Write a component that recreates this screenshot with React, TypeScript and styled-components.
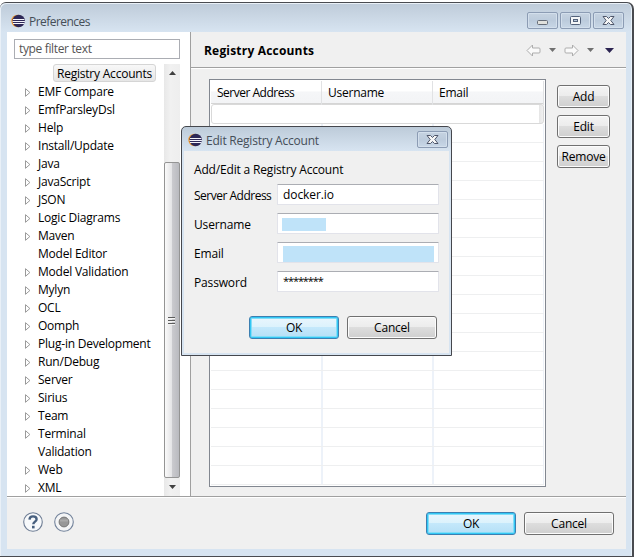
import React from 'react';
import styled, { createGlobalStyle, css } from 'styled-components';

const GlobalStyle = createGlobalStyle`
  *, *::before, *::after { box-sizing: border-box; }
  body { margin: 0; background: #fff; overflow: hidden; }
  button, input { font: inherit; letter-spacing: inherit; color: inherit; margin: 0; }
`;

const Desktop = styled.div`
  position: relative;
  width: 634px;
  height: 557px;
  padding-top: 2px;
  font: 12px/18px "Open Sans", "Noto Sans", sans-serif;
  letter-spacing: -0.22px;
  color: #000;
  white-space: nowrap;
`;

const Window = styled.section`
  width: 634px;
  height: 555px;
  display: flex;
  flex-direction: column;
  border: solid #494b50;
  border-width: 1px 2px 1px 0;
  border-radius: 6px 7px 0 0;
  padding: 0 6px 7px 7px;
  background: linear-gradient(#becbd9, #d7e4f1 29px);
  box-shadow: inset 1px 1px #e9f0f7, inset -1px 0 #e9f2fa;
`;

const TitleBar = styled.header<{ $small?: boolean }>`
  flex: none;
  height: ${(p) => (p.$small ? 24 : 29)}px;
  display: flex;
  align-items: flex-start;
  padding: ${(p) => (p.$small ? '4px 1px 0 4px' : '9px 2px 0 4px')};
`;

const TitleText = styled.h1<{ $track: number }>`
  flex: 1;
  margin: 1px 0 0 4px;
  font-size: 12px;
  line-height: 17px;
  font-weight: 400;
  letter-spacing: ${(p) => p.$track}px;
  color: #454e58;
`;

const LogoSvg = styled.svg`
  flex: none;
  margin-top: 2px;
`;

const CaptionButtons = styled.div`
  display: flex;
  gap: 2px;
`;

const CaptionButton = styled.button`
  width: 31px;
  height: 17px;
  padding: 0;
  display: flex;
  justify-content: center;
  align-items: center;
  border: 1px solid #8c9cb4;
  border-radius: 2px;
  background: linear-gradient(#c6d3e1, #bccbdc 50%, #c8d7e7);
  box-shadow: inset 0 0 0 1px #d3dfec;
  svg { display: block; }
`;

const Client = styled.div`
  flex: 1;
  min-height: 0;
  display: flex;
  flex-direction: column;
  background: #f0f0f0;
`;

const Panes = styled.div`
  height: 465px;
  display: flex;
  border-bottom: 1px solid #a0a0a0;
`;

const Sidebar = styled.nav`
  width: 184px;
  padding: 7px 0 0 7px;
  background: #fff;
  border-right: 1px solid #a0a0a0;
`;

const FilterInput = styled.input`
  display: block;
  width: 166px;
  height: 20px;
  padding: 0 4px 1px;
  border: 1px solid #abadb3;
  border-radius: 0;
  background: #fff;
  outline: none;
  letter-spacing: -0.35px;
  &::placeholder { color: #555; opacity: 1; }
`;

const TreeArea = styled.div`
  display: flex;
  width: 166px;
  height: 432px;
  margin-top: 5px;
`;

const Tree = styled.ul`
  flex: 1;
  min-width: 0;
  margin: 0;
  padding: 0;
  list-style: none;
`;

const TreeItem = styled.li`
  display: flex;
  align-items: center;
  height: 18px;
  padding-left: 11px;
  svg { flex: none; margin-top: 3px; }
`;

const TreeLabel = styled.span`
  margin-left: 7px;
  padding-top: 1px;
  line-height: 17px;
`;

const SelectedItem = styled.span`
  height: 18px;
  margin-left: 28px;
  padding: 0 3px;
  border: 1px solid #d5d5d5;
  border-radius: 3px;
  line-height: 17px;
  background: linear-gradient(#f8f8f8, #e6e6e6);
`;

const Scrollbar = styled.div`
  width: 16px;
  display: flex;
  flex-direction: column;
  background: linear-gradient(90deg, #e8e8e8, #f1f1f1 40%, #eee);
`;

const ScrollArrow = styled.div`
  height: 18px;
  display: flex;
  align-items: center;
  justify-content: center;
  &:first-child { margin-bottom: 80px; }
`;

const Thumb = styled.div`
  flex: 1;
  display: flex;
  align-items: center;
  justify-content: center;
  padding-right: 2px;
  border: 1px solid #949494;
  border-radius: 2px;
  background: linear-gradient(90deg, #fafafa, #e4e4e6 48%, #cacace 52%, #b9babf);
`;

const Main = styled.main`
  flex: 1;
  display: flex;
  flex-direction: column;
`;

const PageHeader = styled.div`
  height: 36px;
  display: flex;
  align-items: center;
  justify-content: space-between;
  padding: 3px 12px 0 13px;
  border-bottom: 1px solid #a0a0a0;
  box-shadow: 0 1px #fff;
`;

const PageTitle = styled.h2`
  margin: 0;
  font-size: 12px;
  font-weight: 700;
  letter-spacing: 0.19px;
`;

const PageBody = styled.div`
  flex: 1;
  display: flex;
  gap: 11px;
  padding: 11px 0 0 18px;
`;

const Table = styled.div`
  width: 337px;
  height: 408px;
  padding: 1px;
  border: 1px solid #828790;
  background: #fff;
`;

const TableRow = styled.div<{ $head?: boolean; $selected?: boolean }>`
  display: grid;
  grid-template-columns: 112px 111px 1fr;
  height: 19px;
  border-bottom: 1px solid #eeeff0;
  ${(p) =>
    p.$head &&
    css`
      grid-template-columns: 111px 111px 1fr;
      height: 23px;
      border-color: #d5d5d5;
      background: linear-gradient(#fff 45%, #f5f6f8 50%, #f3f4f6);
    `}
  ${(p) =>
    p.$selected &&
    css`
      height: 20px;
      border: 1px solid #d9d9d9;
      border-radius: 3px;
      background: linear-gradient(90deg, #fff 327px, #e5e5e5 327px, #f1f1f1);
    `}
`;

const Cell = styled.div<{ $head?: boolean }>`
  padding-left: 6px;
  line-height: 24px;
  border-right: ${(p) => (p.$head ? 1 : 2)}px solid ${(p) => (p.$head ? '#e1e2e4' : '#edf2f9')};
  letter-spacing: ${(p) => (p.children === 'Server Address' ? -0.5 : -0.24)}px;
  &:last-child { border-right-width: 1px; }
`;

const SideActions = styled.div`
  padding-top: 6px;
  display: flex;
  flex-direction: column;
  gap: 7px;
`;

const Button = styled.button<{ $wide?: boolean; $primary?: boolean }>`
  width: ${(p) => (p.$wide ? 90 : 53)}px;
  height: 23px;
  padding: 1px 0 0;
  border: 1px solid #707070;
  border-radius: 3px;
  background: linear-gradient(#f4f4f4, #ececec 48%, #ddd 50%, #cfcfcf);
  box-shadow: inset 0 0 0 1px #fcfcfc;
  ${(p) =>
    p.$primary &&
    css`
      border-color: #3c7fb1;
      background: linear-gradient(#eaf6fd, #dcf2fc 48%, #c4e8fb 50%, #b4dff6);
      box-shadow: inset 0 0 0 1px #32c7f4, inset 0 0 0 2px #83ddf8;
    `}
`;

const Footer = styled.footer`
  flex: 1;
  display: flex;
  align-items: center;
  padding: 0 12px 2px 16px;
  border-top: 1px solid #fff;
`;

const HelpIcons = styled.div`
  flex: 1;
  display: flex;
  gap: 11px;
  margin-bottom: 2px;
`;

const ButtonRow = styled.div`
  display: flex;
  gap: 8px;
  padding-top: 2px;
`;

const Dialog = styled.section`
  position: absolute;
  left: 181px;
  top: 126px;
  width: 271px;
  height: 230px;
  display: flex;
  flex-direction: column;
  padding: 0 2px 2px;
  border: 1px solid #45474d;
  border-radius: 5px 5px 0 0;
  background: linear-gradient(#bdcbd9, #d7e4f1 24px);
`;

const DialogBody = styled.div`
  flex: 1;
  padding: 10px 10px 0;
  background: #f0f0f0;
`;

const Intro = styled.p`
  margin: 0 0 5px;
  line-height: 18px;
  letter-spacing: -0.17px;
`;

const Field = styled.label`
  display: grid;
  grid-template-columns: 83px 162px;
  align-items: center;
  height: 21px;
  margin-bottom: 8px;
`;

const FieldName = styled.span<{ $track?: number }>`
  padding-top: 2px;
  letter-spacing: ${(p) => p.$track ?? -0.15}px;
`;

const FieldBox = styled.span`
  display: flex;
  align-items: center;
  height: 21px;
  padding: 0 4px;
  border: 1px solid #e2e3ea;
  border-top-color: #abadb3;
  border-radius: 1px;
  background: #fff;
`;

const FieldInput = styled.input<{ $secret?: boolean }>`
  width: 100%;
  padding: ${(p) => (p.$secret ? '0 1px 1px' : '1px 1px 0')};
  border: 0;
  outline: none;
  background: none;
  font-size: ${(p) => (p.$secret ? 11 : 12)}px;
  letter-spacing: ${(p) => (p.$secret ? -1.1 : -0.08)}px;
`;

const Redaction = styled.span<{ $w: number; $h: number; $top: number }>`
  width: ${(p) => p.$w}px;
  height: ${(p) => p.$h}px;
  margin-top: ${(p) => p.$top}px;
  margin-left: ${(p) => (p.$w > 100 ? 1 : 0)}px;
  background: #bfe3f9;
`;

const DialogButtons = styled(ButtonRow)`
  justify-content: flex-end;
  padding: 16px 2px 0 0;
`;

const Nav = styled.div`
  display: flex;
  align-items: center;
  gap: 8px;
  margin-top: -2px;
  svg:last-child { margin-left: 3px; }
`;

const EclipseLogo = () => (
  <LogoSvg width="14" height="14" viewBox="0 0 14 14">
    <circle cx="6.5" cy="7" r="6.2" fill="#f49a2b" />
    <circle cx="7.7" cy="7" r="6.2" fill="#2d2858" />
    <path d="M2 5.5h11.4M1.5 7.5h12.4M2 9.5h11.4" stroke="#f4f4fa" strokeWidth="1" />
  </LogoSvg>
);

const MinimizeGlyph = () => (
  <svg width="13" height="11" viewBox="0 0 13 11">
    <rect x="1.5" y="5.5" width="10" height="4" rx="1" fill="#e0e0dc" stroke="#646b76" />
  </svg>
);

const MaximizeGlyph = () => (
  <svg width="11" height="9" viewBox="0 0 11 9">
    <rect x=".5" y=".5" width="10" height="8" rx="1" fill="#f4f6f8" stroke="#53627b" />
    <rect x="3.5" y="3.5" width="4" height="2" fill="#b7c7da" stroke="#53627b" />
  </svg>
);

const CloseGlyph = () => (
  <svg width="13" height="11" viewBox="0 0 13 11">
    <path d="M1 1.5h3.5l2 2 2-2H12L8.8 5.5 12 9.5H8.5l-2-2-2 2H1l3.2-4z" fill="#f7f7f7" stroke="#4e566a" strokeLinejoin="round" />
  </svg>
);

const Expander = ({ hidden }: { hidden: boolean }) => (
  <svg width="6" height="9" viewBox="0 0 6 9">
    {!hidden && <path d="M.5.7v7.6l4.4-3.8z" fill="#fff" stroke="#9a9a9a" />}
  </svg>
);

const ArrowGlyph = ({ right }: { right?: boolean }) => (
  <svg width="15" height="13" viewBox="0 0 15 13">
    <path
      d="M1 6.5 6.5 1v3H13q1 0 1 1v3q0 1-1 1H6.5v3z"
      transform={right ? 'matrix(-1 0 0 1 15 0)' : undefined}
      fill="#fafafa"
      stroke="#adadad"
      strokeLinejoin="round"
    />
  </svg>
);

const Triangle = ({ w, h, color, up }: { w: number; h: number; color: string; up?: boolean }) => (
  <svg width={w} height={h} viewBox="0 0 8 4" preserveAspectRatio="none">
    <path d={up ? 'M0 4h8L4 0z' : 'M0 0h8L4 4z'} fill={color} />
  </svg>
);

const Grip = () => (
  <svg width="7" height="9" viewBox="0 0 7 9">
    <path d="M0 1.5h7M0 4.5h7M0 7.5h7" stroke="#5c5c5c" />
    <path d="M0 2.5h7M0 5.5h7M0 8.5h7" stroke="#f4f4f4" />
  </svg>
);

const HelpGlyph = () => (
  <svg width="20" height="20" viewBox="0 0 20 20">
    <circle cx="10" cy="10" r="9.3" fill="#f7f9fb" stroke="#6e7d94" strokeWidth="1.1" />
    <path d="M6.5 7.6C6.6 5.3 8 4.4 10 4.4c2.2 0 3.6 1.1 3.6 2.8 0 2.4-3.3 2.5-3.3 5.1" fill="none" stroke="#48607f" strokeWidth="2.4" />
    <rect x="9" y="13.8" width="2.6" height="2.6" fill="#48607f" />
  </svg>
);

const RecordGlyph = () => (
  <svg width="20" height="20" viewBox="0 0 20 20">
    <circle cx="10" cy="10" r="9.3" fill="#f4f5f6" stroke="#73839b" strokeWidth="1.1" />
    <circle cx="10" cy="10" r="4.9" fill="#989898" stroke="#777" />
    <path d="M6 8.5h8" stroke="#aaa" strokeWidth="2" />
  </svg>
);

const categories = [
  'EMF Compare', 'EmfParsleyDsl', 'Help', 'Install/Update', 'Java', 'JavaScript', 'JSON',
  'Logic Diagrams', 'Maven', 'Model Editor', 'Model Validation', 'Mylyn', 'OCL', 'Oomph',
  'Plug-in Development', 'Run/Debug', 'Server', 'Sirius', 'Team', 'Terminal', 'Validation',
  'Web', 'XML',
];
const leaves = new Set(['Model Editor', 'Validation']);

export default function App() {
  return (
    <Desktop>
      <GlobalStyle />
      <Window>
        <TitleBar>
          <EclipseLogo />
          <TitleText $track={-0.55}>Preferences</TitleText>
          <CaptionButtons>
            <CaptionButton><MinimizeGlyph /></CaptionButton>
            <CaptionButton><MaximizeGlyph /></CaptionButton>
            <CaptionButton><CloseGlyph /></CaptionButton>
          </CaptionButtons>
        </TitleBar>
        <Client>
          <Panes>
            <Sidebar>
              <FilterInput placeholder="type filter text" />
              <TreeArea>
                <Tree>
                  <TreeItem><SelectedItem>Registry Accounts</SelectedItem></TreeItem>
                  {categories.map((name) => (
                    <TreeItem key={name}>
                      <Expander hidden={leaves.has(name)} />
                      <TreeLabel>{name}</TreeLabel>
                    </TreeItem>
                  ))}
                </Tree>
                <Scrollbar>
                  <ScrollArrow><Triangle w={7} h={4} color="#404040" up /></ScrollArrow>
                  <Thumb><Grip /></Thumb>
                  <ScrollArrow><Triangle w={7} h={4} color="#404040" /></ScrollArrow>
                </Scrollbar>
              </TreeArea>
            </Sidebar>
            <Main>
              <PageHeader>
                <PageTitle>Registry Accounts</PageTitle>
                <Nav>
                  <ArrowGlyph />
                  <Triangle w={7} h={4} color="#707070" />
                  <ArrowGlyph right />
                  <Triangle w={7} h={4} color="#707070" />
                  <Triangle w={9} h={5} color="#2b2350" />
                </Nav>
              </PageHeader>
              <PageBody>
                <Table>
                  <TableRow $head>
                    <Cell $head>Server Address</Cell>
                    <Cell $head>Username</Cell>
                    <Cell $head>Email</Cell>
                  </TableRow>
                  <TableRow $selected />
                  {Array.from({ length: 19 }, (_, i) => (
                    <TableRow key={i}><Cell /><Cell /><Cell /></TableRow>
                  ))}
                </Table>
                <SideActions>
                  <Button>Add</Button>
                  <Button>Edit</Button>
                  <Button>Remove</Button>
                </SideActions>
              </PageBody>
            </Main>
          </Panes>
          <Footer>
            <HelpIcons><HelpGlyph /><RecordGlyph /></HelpIcons>
            <ButtonRow>
              <Button $wide $primary>OK</Button>
              <Button $wide>Cancel</Button>
            </ButtonRow>
          </Footer>
        </Client>
      </Window>
      <Dialog>
        <TitleBar $small>
          <EclipseLogo />
          <TitleText $track={-0.22}>Edit Registry Account</TitleText>
          <CaptionButton><CloseGlyph /></CaptionButton>
        </TitleBar>
        <DialogBody>
          <Intro>Add/Edit a Registry Account</Intro>
          <Field><FieldName $track={-0.5}>Server Address</FieldName><FieldBox><FieldInput defaultValue="docker.io" /></FieldBox></Field>
          <Field><FieldName>Username</FieldName><FieldBox><Redaction $w={44} $h={13} $top={2} /></FieldBox></Field>
          <Field><FieldName>Email</FieldName><FieldBox><Redaction $w={151} $h={16} $top={3} /></FieldBox></Field>
          <Field><FieldName>Password</FieldName><FieldBox><FieldInput $secret defaultValue="********" /></FieldBox></Field>
          <DialogButtons>
            <Button $wide $primary>OK</Button>
            <Button $wide>Cancel</Button>
          </DialogButtons>
        </DialogBody>
      </Dialog>
    </Desktop>
  );
}
